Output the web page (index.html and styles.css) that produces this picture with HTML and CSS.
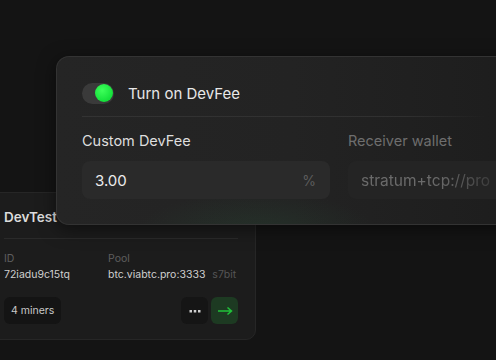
FILE: index.html
```html
<!DOCTYPE html>
<html>
<head>
<meta charset="utf-8">
<link rel="stylesheet" href="styles.css">
</head>
<body>
<div class="stage">
  <div class="card">
    <div class="card-title">DevTest</div>
    <div class="card-info">
      <div class="info-col id-col">
        <div class="info-label">ID</div>
        <div class="info-value">72iadu9c15tq</div>
      </div>
      <div class="info-col">
        <div class="info-label">Pool</div>
        <div class="info-value">btc.viabtc.pro:3333 <span class="info-muted">s7bit</span></div>
      </div>
    </div>
    <div class="card-actions">
      <div class="miners">4 miners</div>
      <div class="action-btns">
        <div class="icon-btn dots">
          <svg width="12" height="4" viewBox="0 0 12 4"><rect x="0.5" y="1" width="2.5" height="2.5" fill="#cfcfcf"/><rect x="4.75" y="1" width="2.5" height="2.5" fill="#cfcfcf"/><rect x="9" y="1" width="2.5" height="2.5" fill="#cfcfcf"/></svg>
        </div>
        <div class="icon-btn go">
          <svg width="16" height="10" viewBox="0 0 16 10"><path d="M1 5H14.5M10.5 1.5L14.5 5L10.5 8.5" stroke="#20c43a" stroke-width="1.5" fill="none"/></svg>
        </div>
      </div>
    </div>
  </div>

  <div class="panel">
    <div class="toggle-row">
      <div class="toggle"><div class="knob"></div></div>
      <span class="toggle-label">Turn on DevFee</span>
    </div>
    <div class="divider"></div>
    <div class="fields">
      <div class="field field-main">
        <div class="field-label">Custom DevFee</div>
        <div class="input">
          <span class="input-value">3.00</span>
          <span class="input-suffix">%</span>
        </div>
      </div>
      <div class="field field-dim">
        <div class="field-label">Receiver wallet</div>
        <div class="input">
          <span class="input-value faded">stratum+tcp://pro</span>
        </div>
      </div>
    </div>
  </div>
</div>
</body>
</html>
```

FILE: styles.css
```css
* { box-sizing: border-box; }
html, body {
  margin: 0;
  padding: 0;
  width: 496px;
  height: 360px;
  overflow: hidden;
  background: #141414;
  font-family: Inter, "Noto Sans", sans-serif;
}
.stage {
  position: relative;
  width: 496px;
  height: 360px;
  overflow: hidden;
  background: #141414;
}

/* back card */
.card {
  position: absolute;
  left: -20px;
  top: 192px;
  width: 276px;
  height: 148px;
  background: #1c1c1c;
  border: 1px solid #262626;
  border-radius: 10px;
  padding: 13px 17px 0 23px;
  display: flex;
  flex-direction: column;
}
.card-title {
  color: #dcdcdc;
  font-size: 13.5px;
  font-weight: 600;
  line-height: 22px;
  padding-bottom: 10px;
  border-bottom: 1px solid #2a2a2a;
  white-space: nowrap;
}
.card-info {
  display: flex;
  padding-top: 13px;
  white-space: nowrap;
}
.info-col { display: flex; flex-direction: column; gap: 1px; }
.id-col { width: 104px; flex: none; }
.info-label {
  color: #5e5e5e;
  font-size: 10.5px;
  line-height: 14px;
}
.info-value {
  color: #cfcfcf;
  font-size: 10.5px;
  line-height: 16px;
}
.info-muted { color: #555; margin-left: 4px; }
.card-actions {
  display: flex;
  justify-content: space-between;
  align-items: center;
  margin-top: 14px;
}
.miners {
  background: #141414;
  color: #c8c8c8;
  font-size: 10.5px;
  height: 27px;
  line-height: 27px;
  padding: 0 7px;
  border-radius: 6px;
}
.action-btns { display: flex; gap: 3px; }
.icon-btn {
  width: 27px;
  height: 27px;
  border-radius: 6px;
  display: flex;
  align-items: center;
  justify-content: center;
}
.dots { background: #151515; }
.go { background: #1d3a22; }

/* front panel */
.panel {
  position: absolute;
  left: 56px;
  top: 56px;
  width: 470px;
  height: 169px;
  border-radius: 13px;
  border: 1px solid #333;
  border-right: none;
  background:
    radial-gradient(ellipse 120px 40px at 200px 175px, rgba(40, 80, 55, 0.3), transparent),
    linear-gradient(to right, #252525 0%, #232323 50%, #1d1d1d 100%);
  box-shadow: 0 4px 18px rgba(0, 0, 0, 0.5);
  padding: 25px 0 0 25px;
  overflow: hidden;
}
.toggle-row {
  display: flex;
  align-items: center;
  height: 22px;
}
.toggle {
  width: 32px;
  height: 21px;
  border-radius: 11px;
  background: #3a3a3a;
  position: relative;
  flex: none;
}
.knob {
  position: absolute;
  right: 1.5px;
  top: 1.5px;
  width: 18px;
  height: 18px;
  border-radius: 50%;
  background: radial-gradient(circle at 40% 35%, #3dff5a, #14e03a 70%);
}
.toggle-label {
  color: #e8e8e8;
  font-size: 15px;
  margin-left: 14px;
}
.divider {
  height: 1px;
  margin-top: 12px;
  margin-right: 40px;
  background: linear-gradient(to right, #333 0%, #303030 80%, rgba(48,48,48,0) 100%);
}
.fields {
  display: flex;
  gap: 18px;
  margin-top: 13px;
}
.field {
  display: flex;
  flex-direction: column;
  gap: 9px;
  min-width: 0;
}
.field-main { width: 248px; flex: none; }
.field-dim { flex: 1; }
.field-label {
  color: #dedede;
  font-size: 14.5px;
  line-height: 22px;
  white-space: nowrap;
}
.input {
  height: 38px;
  background: #2a2a2a;
  border-radius: 8px;
  display: flex;
  align-items: center;
  justify-content: space-between;
  padding: 0 14px 0 13px;
  overflow: hidden;
  white-space: nowrap;
}
.input-value {
  color: #ececec;
  font-size: 15px;
}
.input-suffix {
  color: #5c5c5c;
  font-size: 14px;
}
.field-dim .field-label { color: #6e6e6e; }
.field-dim .input { background: #242424; }
.field-dim .input-value {
  color: #6a6a6a;
  font-size: 15.5px;
  -webkit-mask-image: linear-gradient(to right, #000 60%, rgba(0,0,0,0.35) 100%);
  mask-image: linear-gradient(to right, #000 60%, rgba(0,0,0,0.35) 100%);
}
```
